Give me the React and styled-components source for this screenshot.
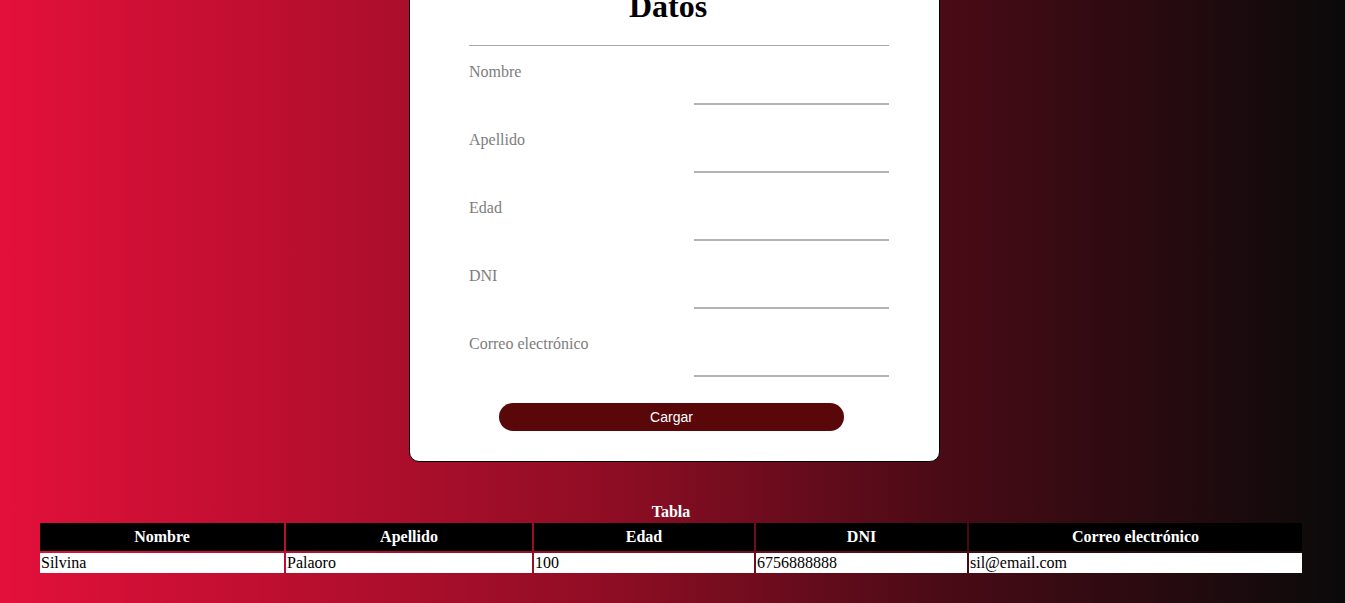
import React from "react";
import styled, { createGlobalStyle } from "styled-components";

const Global = createGlobalStyle`
  html, body { margin: 0; padding: 0; }
  body {
    min-height: 603px;
    background: linear-gradient(to right, #e3103a 0%, #8f0d24 45%, #4a0b16 70%, #0a0a0a 100%);
    font-family: "Liberation Serif", "Times New Roman", serif;
    overflow: hidden;
  }
`;

const Page = styled.div`
  display: flex;
  flex-direction: column;
  align-items: flex-start;
  margin-top: -33px;
`;

const Card = styled.form`
  box-sizing: border-box;
  width: 531px;
  margin-left: 409px;
  background: #fff;
  border: 1px solid #000;
  border-radius: 10px;
  padding: 20px 50px 30px 59px;
  display: flex;
  flex-direction: column;
`;

const Title = styled.h1`
  margin: 0;
  font-size: 32px;
  line-height: 37px;
  font-weight: bold;
  text-align: center;
  color: #000;
  padding: 0 22px 20px 0;
  border-bottom: 1px solid #a8a8a8;
`;

const Fields = styled.div`
  display: flex;
  flex-direction: column;
  gap: 26px;
  margin-top: 17px;
`;

const Field = styled.label`
  display: flex;
  flex-direction: column;
`;

const LabelText = styled.span`
  font-size: 16px;
  line-height: 18px;
  color: #7d7d7d;
`;

const Input = styled.input`
  align-self: flex-end;
  box-sizing: border-box;
  width: 195px;
  height: 24px;
  border: none;
  border-bottom: 2px solid #b3b3b3;
  outline: none;
  background: transparent;
  font-family: "Liberation Serif", serif;
  font-size: 16px;
  padding: 0;
`;

const Button = styled.button`
  margin: 26px 0 0 30px;
  width: 345px;
  height: 28px;
  border: none;
  border-radius: 14px;
  background: #590709;
  color: #fff;
  font-family: "Liberation Sans", Arial, sans-serif;
  font-size: 14px;
  cursor: pointer;
`;

const Table = styled.table`
  margin: 40px 0 0 38px;
  width: 1266px;
  border-spacing: 2px;
  table-layout: fixed;
`;

const Caption = styled.caption`
  font-weight: bold;
  color: #fff;
  font-size: 16px;
  line-height: 19px;
`;

const Th = styled.th`
  background: #000;
  color: #fff;
  font-size: 16px;
  font-weight: bold;
  height: 28px;
  padding: 0;
  text-align: center;
`;

const Td = styled.td`
  background: #fff;
  color: #000;
  font-size: 16px;
  height: 20px;
  padding: 0 1px;
  text-align: left;
`;

const fields = ["Nombre", "Apellido", "Edad", "DNI", "Correo electrónico"];
const widths = [244, 246, 220, 211, 333];
const row = ["Silvina", "Palaoro", "100", "6756888888", "sil@email.com"];

export default function App() {
  return (
    <>
      <Global />
      <Page>
        <Card onSubmit={(e) => e.preventDefault()}>
          <Title>Datos</Title>
          <Fields>
            {fields.map((f) => (
              <Field key={f}>
                <LabelText>{f}</LabelText>
                <Input type="text" />
              </Field>
            ))}
          </Fields>
          <Button type="submit">Cargar</Button>
        </Card>
        <Table>
          <Caption>Tabla</Caption>
          <colgroup>
            {widths.map((w, i) => (
              <col key={i} style={{ width: w }} />
            ))}
          </colgroup>
          <thead>
            <tr>
              {fields.map((f) => (
                <Th key={f}>{f}</Th>
              ))}
            </tr>
          </thead>
          <tbody>
            <tr>
              {row.map((c, i) => (
                <Td key={i}>{c}</Td>
              ))}
            </tr>
          </tbody>
        </Table>
      </Page>
    </>
  );
}
